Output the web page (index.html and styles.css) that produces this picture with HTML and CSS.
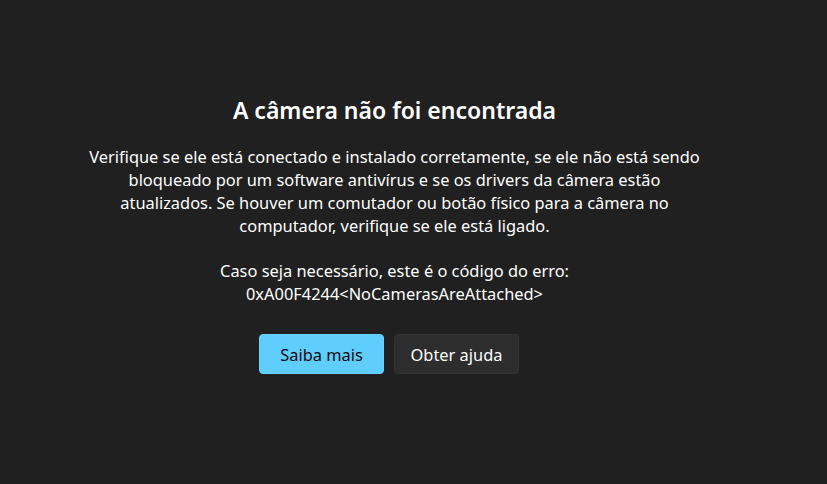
FILE: index.html
```
<!DOCTYPE html>
<html lang="pt-BR">
<head>
  <meta charset="UTF-8">
  <title>Câmera</title>
  <link rel="stylesheet" href="styles.css">
</head>
<body>
<div class="page">
  <div class="message">
    <div class="title">A câmera não foi encontrada</div>
    <p class="details">
      Verifique se ele está conectado e instalado corretamente, se ele não está sendo<br>
      bloqueado por um software antivírus e se os drivers da câmera estão<br>
      atualizados. Se houver um comutador ou botão físico para a câmera no<br>
      computador, verifique se ele está ligado.
    </p>
    <p class="details">
      Caso seja necessário, este é o código do erro:<br>
      0xA00F4244&lt;NoCamerasAreAttached&gt;
    </p>
    <div class="actions">
      <button class="btn btn-accent">Saiba mais</button>
      <button class="btn">Obter ajuda</button>
    </div>
  </div>
</div>
</body>
</html>
```

FILE: styles.css
```
body {
  margin: 0;
  background-color: #202020;
  color: #ffffff;
  font-family: "Noto Sans", "Open Sans", sans-serif;
}

.page {
  width: 789px;
  height: 484px;
  display: flex;
  justify-content: center;
}

.message {
  display: flex;
  flex-direction: column;
  align-items: center;
  text-align: center;
  padding-top: 96px;
}

.title {
  font-size: 23px;
  font-weight: 600;
  line-height: 28px;
}

.details {
  margin: 21px 0 0;
  font-size: 16.4px;
  line-height: 23px;
}

.details + .details {
  margin-top: 22px;
}

.actions {
  display: flex;
  gap: 10px;
  margin-top: 29px;
  margin-right: 11px; /* buttons sit a bit left of the text */
}

.btn {
  width: 125px;
  height: 40px;
  border: 1px solid #333333;
  border-radius: 4px;
  background-color: #2d2d2d;
  color: #ffffff;
  font-family: inherit;
  font-size: 16.4px;
  cursor: pointer;
}

.btn-accent {
  background-color: #60cdff;
  border-color: #6ad0ff;
  color: #0a0a0a;
}
```
